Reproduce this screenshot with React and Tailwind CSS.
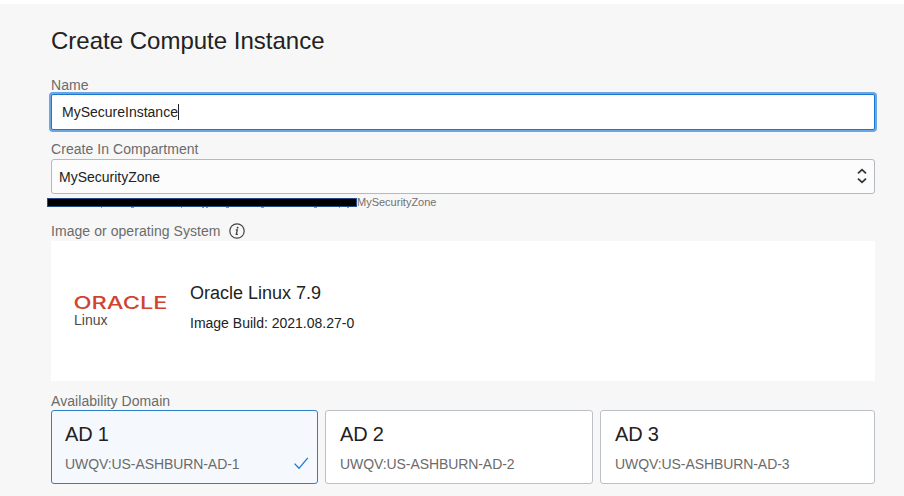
const zones = [
  { title: 'AD 1', id: 'UWQV:US-ASHBURN-AD-1', selected: true },
  { title: 'AD 2', id: 'UWQV:US-ASHBURN-AD-2' },
  { title: 'AD 3', id: 'UWQV:US-ASHBURN-AD-3' },
];

function Label({ children }) {
  return <div className="flex h-4 items-center text-[14px] leading-4 tracking-[0.06px] text-[#6b6b6b]">{children}</div>;
}

function InfoIcon() {
  return (
    <svg className="ml-2 h-4 w-4 shrink-0" viewBox="0 0 16 16" fill="none" stroke="#444">
      <circle cx="8" cy="8" r="7.2" strokeWidth="1.2" />
      <path d="M6.7 6.9h1.6L7.3 11.3h1.6" strokeWidth="1.3" />
      <circle cx="8.6" cy="4.7" r="0.9" fill="#333" stroke="none" />
    </svg>
  );
}

function OracleLogo() {
  return (
    <div className="w-[94px]">
      <svg className="block h-[14px] w-[94px] overflow-visible" viewBox="0 0 94 14">
        <text
          x="-0.5" y="13.2" textLength="94" lengthAdjust="spacingAndGlyphs"
          fontFamily="Inter, sans-serif" fontSize="17" fontWeight="500" fill="#d0442f"
        >
          ORACLE
        </text>
      </svg>
      <div className="mt-[2px] text-[14px] leading-4 text-[#4a4a4a]">Linux</div>
    </div>
  );
}

// Solid redaction bar; the descenders of the covered path show just below it.
function RedactionBar() {
  return (
    <span className="relative h-[9px] w-[310px] border border-[#244a88] bg-black">
      <svg className="absolute top-[8px] left-0 h-px w-[308px]" viewBox="0 0 308 1" stroke="#8f949c">
        <path d="M53 .5h1M83 .5h3M133 .5h1M154 .5h2M158 .5h2M178 .5h3M213 .5h3M266 .5h3M291 .5h1M299 .5h2" />
      </svg>
    </span>
  );
}

function ZoneCard({ title, id, selected }) {
  return (
    <div className={`flex h-[74px] flex-col rounded-[3px] border pt-[11px] pr-[8px] ${selected ? 'border-[#2b80c8] bg-[#f5f9fd] pl-[13px]' : 'border-[#bcc1c7] bg-white pl-[14px]'}`}>
      <div className="text-[20px] leading-6 tracking-[-0.2px] text-[#222]">{title}</div>
      <div className="mt-[10px] flex items-center justify-between text-[14px] leading-4 tracking-[-0.08px] text-[#6b6b6b]">
        {id}
        {selected && (
          <svg className="h-[14px] w-[16px]" viewBox="0 0 16 14" fill="none" stroke="#1976d2" strokeWidth="1.3">
            <path d="M1.6 6.6 6 11.3 14.8 0.8" />
          </svg>
        )}
      </div>
    </div>
  );
}

export default function App() {
  return (
    <div className="h-[496px] w-[904px] overflow-hidden border-t-4 border-white bg-[#f7f7f7] pl-[51px] font-['Liberation_Sans',Arial,sans-serif] text-[#222]">
      <main className="w-[824px]">
        <h1 className="pt-[23px] text-[24px] leading-7">Create Compute Instance</h1>
        <div className="mt-[22px]"><Label>Name</Label></div>
        <div className="mt-[1px] flex h-[36px] items-center rounded-[2px] border border-[#1b78d0] bg-white pl-[10px] text-[14px] ring-2 ring-[#6ba6e3]">
          <span>MySecureInstance</span>
          <span className="h-4 w-px bg-[#222]" />
        </div>
        <div className="mt-[11px]"><Label>Create In Compartment</Label></div>
        <div className="mt-[2px] flex h-[35px] items-center justify-between rounded-[3px] border border-[#b4b9c0] bg-[#fcfcfc] pr-[7px] pl-[7px] text-[14px]">
          <span className="pt-[2px]">MySecurityZone</span>
          <svg className="mb-[2px] h-4 w-[10px]" viewBox="0 0 10 16" fill="none" stroke="#333" strokeWidth="1.8">
            <path d="M1 5.3 5 1.7 9 5.3M1 10.7 5 14.3 9 10.7" />
          </svg>
        </div>
        <div className="mt-[2px] -ml-[4px] flex h-[13px] items-center text-[11px] leading-[13px] text-[#707070]">
          <RedactionBar />
          <span>MySecurityZone</span>
        </div>
        <div className="mt-[14px]"><Label>Image or operating System<InfoIcon /></Label></div>
        <section className="mt-[2px] flex h-[140px] bg-white pl-[23px]">
          <div className="mt-[55px]"><OracleLogo /></div>
          <div className="ml-[22px] pt-[42px]">
            <div className="text-[18px] leading-5">Oracle Linux 7.9</div>
            <div className="mt-[12px] text-[14px] leading-4">Image Build: 2021.08.27-0</div>
          </div>
        </section>
        <div className="mt-[12px]"><Label>Availability Domain</Label></div>
        <div className="mt-[1px] grid grid-cols-[267px_268px_275px] gap-[7px]">
          {zones.map((zone) => <ZoneCard key={zone.id} {...zone} />)}
        </div>
      </main>
    </div>
  );
}
